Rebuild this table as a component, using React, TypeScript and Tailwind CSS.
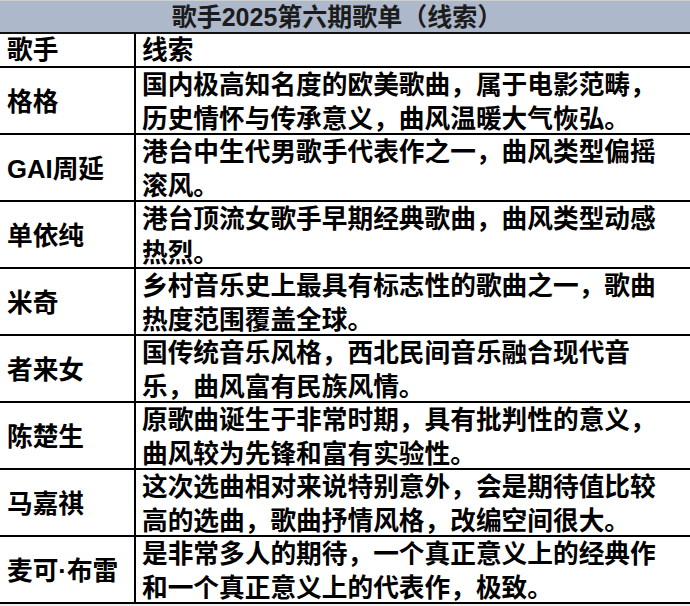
const rows: [string, string[]][] = [
  ["格格", ["国内极高知名度的欧美歌曲，属于电影范畴，", "历史情怀与传承意义，曲风温暖大气恢弘。"]],
  ["GAI周延", ["港台中生代男歌手代表作之一，曲风类型偏摇", "滚风。"]],
  ["单依纯", ["港台顶流女歌手早期经典歌曲，曲风类型动感", "热烈。"]],
  ["米奇", ["乡村音乐史上最具有标志性的歌曲之一，歌曲", "热度范围覆盖全球。"]],
  ["者来女", ["国传统音乐风格，西北民间音乐融合现代音", "乐，曲风富有民族风情。"]],
  ["陈楚生", ["原歌曲诞生于非常时期，具有批判性的意义，", "曲风较为先锋和富有实验性。"]],
  ["马嘉祺", ["这次选曲相对来说特别意外，会是期待值比较", "高的选曲，歌曲抒情风格，改编空间很大。"]],
  ["麦可·布雷", ["是非常多人的期待，一个真正意义上的经典作", "和一个真正意义上的代表作，极致。"]],
]

export default function App() {
  return (
    <div className="w-[690px] h-[606px] bg-white overflow-hidden font-['Liberation_Sans','Noto_Sans_CJK_SC',sans-serif] font-bold text-black">
      <div className="h-[34px] bg-[#adb8ca] border-t border-t-[#cfcfcf] border-b-2 border-b-[#111] flex items-center justify-center text-[25px] leading-none text-[#1c1c1c] pr-[16px] pt-[1px]">
        歌手2025第六期歌单（线索）
      </div>
      <div className="grid grid-cols-[136px_1fr]">
        <div className="h-[34px] border-b-2 border-r-2 border-black flex items-center pl-[7px] pt-[1px] text-[25.7px] leading-none">歌手</div>
        <div className="h-[34px] border-b-2 border-black flex items-center pl-[6px] pt-[1px] text-[25.7px] leading-none">线索</div>
        {rows.map(([name, lines]) => (
          <div key={name} className="contents">
            <div className="h-[67px] border-b-2 border-r-2 border-black flex items-center pl-[7px] pt-[4px] text-[25.7px] leading-none whitespace-nowrap">
              {name}
            </div>
            <div className="h-[67px] border-b-2 border-black flex flex-col justify-center pl-[6px] pt-[4px] text-[25.7px] leading-[33.5px] whitespace-nowrap">
              {lines.map((l) => (
                <div key={l}>{l}</div>
              ))}
            </div>
          </div>
        ))}
      </div>
      <div className="h-[2px] bg-[#eeeeee]" />
    </div>
  )
}
